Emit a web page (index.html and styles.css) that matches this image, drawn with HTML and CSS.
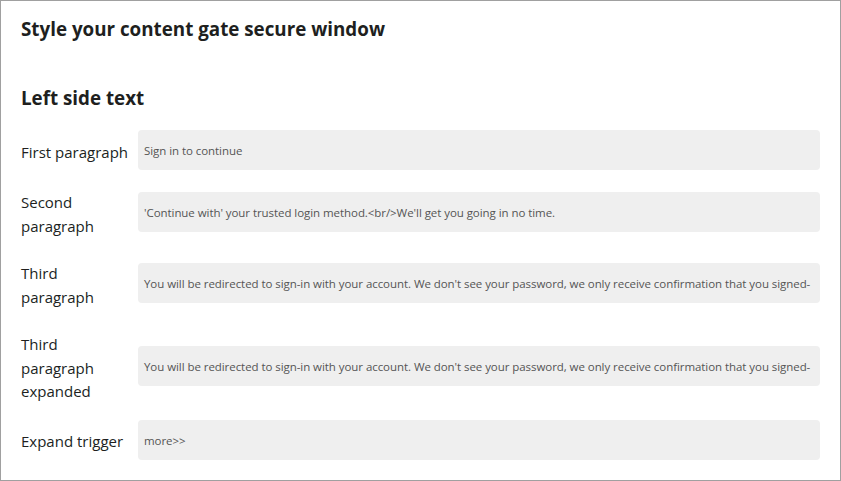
FILE: index.html
```html
<!DOCTYPE html>
<html>
<head>
<meta charset="utf-8">
<link rel="stylesheet" href="styles.css">
</head>
<body>
<div class="panel">
  <h1 class="title">Style your content gate secure window</h1>
  <h2 class="section">Left side text</h2>
  <div class="form">
    <div class="row">
      <div class="label">First paragraph</div>
      <div class="field">Sign in to continue</div>
    </div>
    <div class="row">
      <div class="label">Second paragraph</div>
      <div class="field">'Continue with' your trusted login method.&lt;br/&gt;We'll get you going in no time.</div>
    </div>
    <div class="row">
      <div class="label">Third paragraph</div>
      <div class="field">You will be redirected to sign-in with your account. We don't see your password, we only receive confirmation that you signed-</div>
    </div>
    <div class="row">
      <div class="label">Third paragraph expanded</div>
      <div class="field">You will be redirected to sign-in with your account. We don't see your password, we only receive confirmation that you signed-</div>
    </div>
    <div class="row">
      <div class="label">Expand trigger</div>
      <div class="field">more&gt;&gt;</div>
    </div>
  </div>
</div>
</body>
</html>
```
FILE: styles.css
```css
html, body {
  margin: 0;
  padding: 0;
  background: #ffffff;
}
body {
  font-family: "Open Sans", "Noto Sans", sans-serif;
  color: #201f1e;
}
.panel {
  box-sizing: border-box;
  width: 841px;
  height: 481px;
  border: 1px solid #a0a0a0;
  padding: 14px 20px 0 20px;
  overflow: hidden;
}
.title {
  margin: 0;
  font-size: 18.8px;
  font-weight: 700;
  line-height: 28px;
}
.section {
  margin: 41px 0 0 0;
  font-size: 18.8px;
  font-weight: 700;
  line-height: 28px;
}
.form {
  margin-top: 18px;
  display: flex;
  flex-direction: column;
  gap: 13px;
}
.row {
  display: flex;
  align-items: center;
}
.label {
  width: 110px;
  margin-right: 7px;
  flex: none;
  font-size: 15px;
  line-height: 23.5px;
  padding: 8px 0 3px 0;
}
.field {
  flex: 1;
  height: 40px;
  box-sizing: border-box;
  background: #efefef;
  border-radius: 4px;
  padding: 2px 6px 0 6px;
  font-size: 11.5px;
  letter-spacing: -0.06px;
  line-height: 38px;
  color: #555555;
  white-space: nowrap;
  overflow: hidden;
}
```
